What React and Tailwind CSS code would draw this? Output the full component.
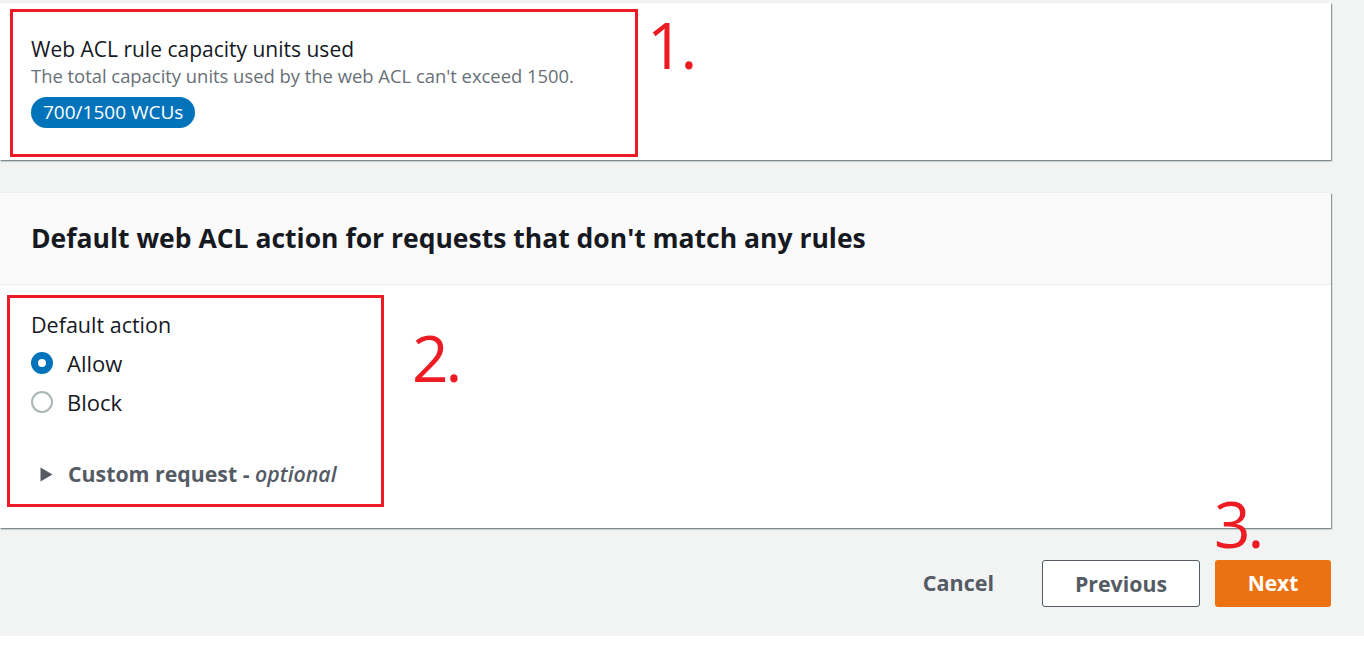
import React from 'react';

const font = { fontFamily: '"Open Sans", "Noto Sans", sans-serif' };

const Radio = ({ checked, label }) => (
    <label className="flex items-center gap-[14px] cursor-pointer">
        {checked ? (
            <span className="w-[22px] h-[22px] rounded-full bg-[#0073bb] flex items-center justify-center">
                <span className="w-[8px] h-[8px] rounded-full bg-white" />
            </span>
        ) : (
            <span className="w-[22px] h-[22px] rounded-full border-2 border-[#aab7b8] bg-white" />
        )}
        <span className="text-[22px] leading-[26px] text-[#16191f]">{label}</span>
    </label>
);

export default function App() {
    return (
        <div className="w-[1364px] h-[648px] bg-white overflow-hidden" style={font}>
            <div className="relative h-[636px] bg-[#f2f3f3] pt-[3px]">
                {/* capacity card */}
                <section className="w-[1331px] h-[157px] bg-white shadow-[1px_1px_1px_0_rgba(0,28,36,0.35),0_1px_2px_0_rgba(0,28,36,0.3)] flex items-start">
                    <div className="ml-[10px] mt-[6px] w-[628px] h-[148px] border-[3px] border-[#ed1c24] pl-[18px] pt-[23px]">
                        <h3 className="text-[21px] leading-[28px] text-[#16191f]">Web ACL rule capacity units used</h3>
                        <p className="text-[18.4px] leading-[24px] text-[#687078] mt-[1px] whitespace-nowrap">
                            The total capacity units used by the web ACL can't exceed 1500.
                        </p>
                        <span className="inline-block mt-[9px] px-[12px] h-[31px] leading-[31px] rounded-full bg-[#0073bb] text-white text-[19px]">
                            700/1500 WCUs
                        </span>
                    </div>
                    <span className="ml-[9px] mt-[2px] text-[64px] leading-[80px] tracking-[-3px] text-[#ed1c24]">1.</span>
                </section>

                {/* default action card */}
                <section className="mt-[33px] w-[1331px] h-[335px] bg-white shadow-[1px_1px_1px_0_rgba(0,28,36,0.35),0_1px_2px_0_rgba(0,28,36,0.3)]">
                    <header className="h-[92px] bg-[#fafafa] border-b border-[#eaeded] pl-[31px] flex items-center">
                        <h2 className="text-[26.5px] font-bold text-[#16191f] whitespace-nowrap">
                            Default web ACL action for requests that don't match any rules
                        </h2>
                    </header>
                    <div className="flex items-start">
                        <div className="ml-[7px] mt-[10px] w-[377px] h-[212px] border-[3px] border-[#ed1c24] pl-[21px] pt-[13px]">
                            <div className="text-[21.5px] leading-[28px] text-[#16191f]">Default action</div>
                            <div className="mt-[11px] flex flex-col gap-[13px]">
                                <Radio checked label="Allow" />
                                <Radio label="Block" />
                            </div>
                            <button className="mt-[45px] ml-[9px] flex items-center gap-[15px] text-[21.3px] leading-[28px] font-bold text-[#545b64] whitespace-nowrap">
                                <svg width="13" height="15" viewBox="0 0 13 15">
                                    <path d="M0.5 0.5 L12.5 7.5 L0.5 14.5 Z" fill="#545b64" />
                                </svg>
                                <span>Custom request - <i className="font-semibold">optional</i></span>
                            </button>
                        </div>
                        <span className="ml-[28px] mt-[33px] text-[64px] leading-[80px] tracking-[-3px] text-[#ed1c24]">2.</span>
                    </div>
                </section>

                {/* footer actions */}
                <div className="w-[1331px] mt-[32px] flex items-center justify-end">
                    <button className="text-[21.5px] font-bold text-[#545b64] mr-[48px]">Cancel</button>
                    <button className="w-[158px] h-[47px] rounded-[3px] border border-[#545b64] bg-white text-[21.3px] font-bold text-[#545b64] mr-[15px]">
                        Previous
                    </button>
                    <div className="relative">
                        <span className="absolute -left-[1px] -top-[76px] text-[64px] leading-[80px] tracking-[-3px] text-[#ed1c24]">3.</span>
                        <button className="w-[116px] h-[47px] rounded-[3px] bg-[#ec7211] text-[21px] font-bold text-white">
                            Next
                        </button>
                    </div>
                </div>
            </div>
        </div>
    );
}
